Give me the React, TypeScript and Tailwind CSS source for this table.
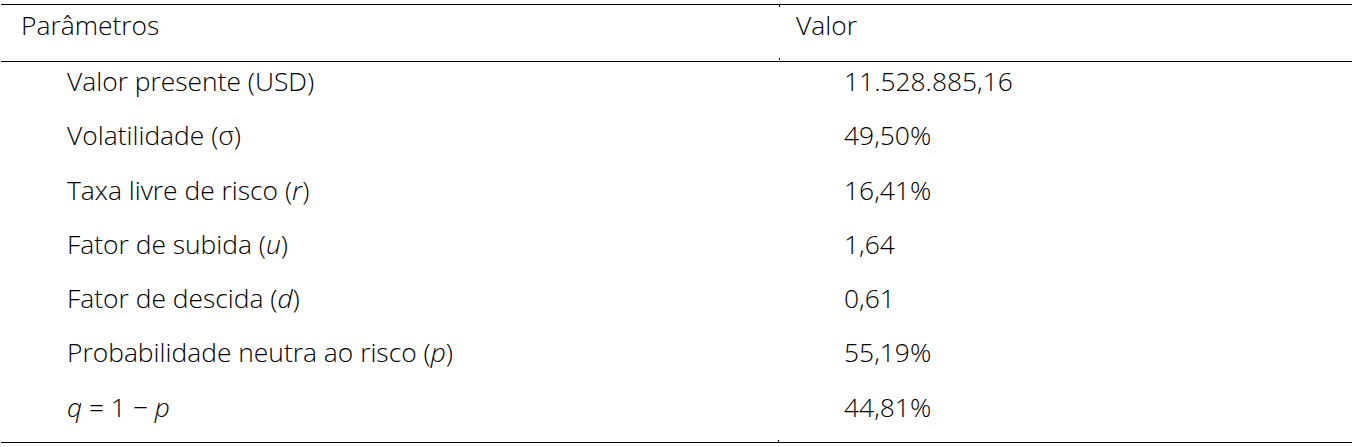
const rows: { label: React.ReactNode; value: string }[] = [
  { label: "Valor presente (USD)", value: "11.528.885,16" },
  { label: "Volatilidade (σ)", value: "49,50%" },
  {
    label: (
      <>
        Taxa livre de risco (<i>r</i>)
      </>
    ),
    value: "16,41%",
  },
  {
    label: (
      <>
        Fator de subida (<i>u</i>)
      </>
    ),
    value: "1,64",
  },
  {
    label: (
      <>
        Fator de descida (<i>d</i>)
      </>
    ),
    value: "0,61",
  },
  {
    label: (
      <>
        Probabilidade neutra ao risco (<i>p</i>)
      </>
    ),
    value: "55,19%",
  },
  {
    label: (
      <>
        <i>q</i> = 1 − <i>p</i>
      </>
    ),
    value: "44,81%",
  },
];

export default function App() {
  return (
    <div
      className="w-[1356px] h-[447px] bg-white pt-1 text-black text-[26.4px] font-[350]"
      style={{ fontFamily: '"Open Sans", "Liberation Sans", sans-serif' }}
    >
      <div className="relative ml-[1px] w-[1351px] border-b border-black">
        {/* cell boundary ticks */}
        <span className="absolute left-[778px] top-[1px] h-[2px] w-[1px] bg-black" />
        <span className="absolute left-[778px] top-[54px] h-[2px] w-[1px] bg-black" />
        <span className="absolute left-[777px] bottom-0 h-[2px] w-[1px] bg-black" />

        <div className="flex h-[58px] border-y border-black">
          <div className="w-[777px] pl-[20px] leading-[40px]">Parâmetros</div>
          <div className="flex-1 pl-[18px] leading-[40px]">Valor</div>
        </div>

        <div className="flex h-[380px] flex-col">
          {rows.map((row, i) => (
            <div key={i} className="flex flex-1">
              <div className="w-[777px] pl-[66px] leading-[38px]">{row.label}</div>
              <div className="flex-1 pl-[66px] leading-[38px]">{row.value}</div>
            </div>
          ))}
        </div>
      </div>
    </div>
  );
}
